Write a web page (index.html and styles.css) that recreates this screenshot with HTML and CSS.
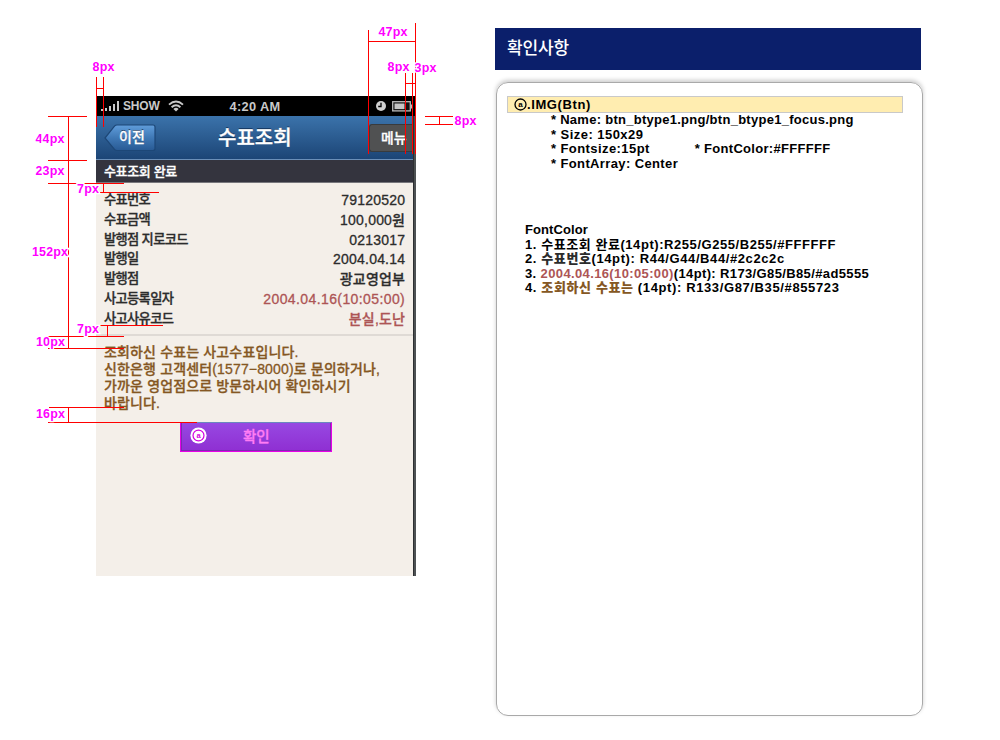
FILE: index.html
```html
<!DOCTYPE html>
<html lang="ko">
<head>
<meta charset="utf-8">
<title>수표조회</title>
<link rel="stylesheet" href="styles.css">
</head>
<body>
<main class="board">
  <section class="phone">
    <div class="screen">
      <div class="status">
        <svg class="signal" width="18" height="12" viewBox="0 0 18 12"><path d="M0 9h2v2H0zM4 8h2v3H4zM8 6h2v5H8zM12 4h2v7h-2zM16 1h2v10h-2z" fill="#c9c9c9"/></svg>
        <span class="carrier">SHOW</span>
        <svg class="wifi" width="16" height="12" viewBox="0 0 16 12" fill="none" stroke="#c9c9c9" stroke-width="1.9"><path d="M1 4.6Q8-1.6 15 4.6M3.6 7.3Q8 3.2 12.4 7.3"/><path d="M5.4 8.9Q8 6.6 10.6 8.9L8 11.5z" fill="#c9c9c9" stroke="none"/></svg>
        <span class="clock">4:20 AM</span>
        <svg class="alarm" width="10" height="10" viewBox="0 0 10 10"><circle cx="5" cy="5" r="5" fill="#d0d0d0"/><path d="M5 1.8V5.5H2.2" fill="none" stroke="#000" stroke-width="1.3"/></svg>
        <svg class="battery" width="21" height="11" viewBox="0 0 21 11"><rect x=".7" y=".7" width="17.6" height="9.2" fill="#111" stroke="#bbb" stroke-width="1.3"/><rect x="2.5" y="2.5" width="10" height="5.6" fill="#c4c4c4"/><path d="M19 3.5h2v4h-2z" fill="#bbb"/></svg>
      </div>
      <header class="nav">
        <div class="back">
          <svg class="back-shape" width="52" height="28" viewBox="0 0 52 28"><defs><linearGradient id="bk" x2="0" y2="1"><stop offset="0" stop-color="#609ddb"/><stop offset=".5" stop-color="#3f78b5"/><stop offset="1" stop-color="#285a94"/></linearGradient></defs><path d="M1 14L10.5 2.2Q11.5 1 13 1H49Q51 1 51 3V24.5Q51 26.5 49 26.5H13Q11.5 26.5 10.5 25.3Z" fill="url(#bk)" stroke="#1d4777" stroke-width="1.2"/></svg>
          <span class="back-text">이전</span>
        </div>
        <h1 class="title">수표조회</h1>
        <div class="menu">메뉴</div>
      </header>
      <div class="section">수표조회 완료</div>
      <dl class="rows">
        <div class="row"><dt>수표번호</dt><dd>79120520</dd></div>
        <div class="row"><dt>수표금액</dt><dd>100,000원</dd></div>
        <div class="row"><dt>발행점 지로코드</dt><dd>0213017</dd></div>
        <div class="row"><dt>발행일</dt><dd>2004.04.14</dd></div>
        <div class="row"><dt>발행점</dt><dd>광교영업부</dd></div>
        <div class="row"><dt>사고등록일자</dt><dd class="alert date">2004.04.16(10:05:00)</dd></div>
        <div class="row"><dt>사고사유코드</dt><dd class="alert">분실,도난</dd></div>
      </dl>
      <p class="message">조회하신 수표는 사고수표입니다.<br>신한은행 고객센터(1577−8000)로 문의하거나,<br>가까운 영업점으로 방문하시어 확인하시기<br>바랍니다.</p>
      <div class="confirm">
        <svg class="marker" width="17" height="17" viewBox="0 0 18 18"><circle cx="9" cy="9" r="8.6" fill="#fff"/><circle cx="9" cy="9" r="5.8" fill="none" stroke="#d400e0" stroke-width="1.3"/><text x="9" y="11.7" text-anchor="middle" class="marker-text">a</text></svg>
        <span class="confirm-text">확인</span>
      </div>
    </div>
  </section>
  <aside class="spec">
    <h2 class="spec-title">확인사항</h2>
    <div class="card">
      <div class="tag"><svg width="13" height="13" viewBox="0 0 13 13"><circle cx="6.5" cy="6.5" r="5.5" fill="none" stroke="#000" stroke-width="1.3"/><text x="6.5" y="9.2" text-anchor="middle" class="tag-text">a</text></svg><span class="tag-name">.IMG(Btn)</span></div>
      <ul class="props">
        <li class="prop-name">* Name: btn_btype1.png/btn_btype1_focus.png</li>
        <li class="prop-size">* Size: 150x29</li>
        <li class="prop-font"><span>* Fontsize:15pt</span><span class="color-prop">* FontColor:#FFFFFF</span></li>
        <li class="prop-array">* FontArray: Center</li>
      </ul>
      <div class="colors">
        <div class="color-head">FontColor</div>
        <div class="color-white">1. 수표조회 완료(14pt):R255/G255/B255/#FFFFFF</div>
        <div class="color-ink">2. <b class="ink">수표번호</b>(14pt): R44/G44/B44/#2c2c2c</div>
        <div class="color-red">3. <b class="red">2004.04.16(10:05:00)</b>(14pt): R173/G85/B85/#ad5555</div>
        <div class="color-brown">4. <b class="brown">조회하신 수표는</b> (14pt): R133/G87/B35/#855723</div>
      </div>
    </div>
  </aside>
  <svg class="measures" width="500" height="480" viewBox="0 0 500 480">
    <path class="guide" d="M96.5 77V127M103.5 77V127M96 88.5H104
      M48 116.5H87M48 160.5H87M48 183.5H124M68.5 116V349M103.5 183V193M100 192.5H159
      M100 325.5H163M107.5 325V336M48 336.5H124M48 348.5H124
      M49 407.5H124M48 422.5H197M68.5 407V423
      M368.5 30V154M415.5 23V154M368 41.5H416M405.5 73V154M412.5 73V154M405 83.5H416
      M425 116.5H453M425 124.5H453M439.5 116V125"/>
    <g class="measure">
      <text x="92.5" y="71" textLength="22">8px</text>
      <text x="35.5" y="143" textLength="29">44px</text>
      <text x="35.5" y="175" textLength="29">23px</text>
      <text x="77" y="193" textLength="22">7px</text>
      <text x="32" y="256" textLength="36">152px</text>
      <text x="77" y="333" textLength="22">7px</text>
      <text x="36" y="346" textLength="29">10px</text>
      <text x="36" y="418" textLength="29">16px</text>
      <text x="378.5" y="36" textLength="29">47px</text>
      <text x="387.5" y="71" textLength="22">8px</text>
      <text x="414.5" y="72" textLength="22">3px</text>
      <text x="454.5" y="125" textLength="22">8px</text>
    </g>
  </svg>
</main>
</body>
</html>
```
FILE: styles.css
```css
* { box-sizing: border-box; }
body { margin: 0; background: #fff; font-family: "Liberation Sans", "Noto Sans CJK KR", sans-serif; }
.board { position: relative; display: flex; align-items: flex-start; width: 1000px; height: 740px; padding: 28px 77px 0 96px; }
.phone { width: 320px; margin-top: 68px; height: 480px; background: linear-gradient(90deg, #2d2f31 0 1px, #4d5153 1px) right / 3px 100% no-repeat; -webkit-text-stroke: .3px; }
.screen { width: 317px; height: 480px; background: #f4efe9; }
.status { display: flex; align-items: center; width: 320px; height: 20px; background: #000; color: #c9c9c9; font: bold 12px "Liberation Sans", sans-serif; padding-left: 5px; -webkit-text-stroke: 0; }
.signal, .wifi, .alarm, .battery { flex: none; }
.carrier { margin-left: 4px; letter-spacing: -.2px; }
.wifi { margin-left: 8px; }
.clock { width: 54px; margin-left: 46px; letter-spacing: .35px; font-size: 12.8px; white-space: nowrap; }
.alarm { margin-left: 92px; }
.battery { margin-left: 6px; }
.nav { display: flex; align-items: flex-start; height: 44px; background: linear-gradient(#3b73ab, #1c4576); border-bottom: 1px solid #6b8fb8; color: #fff; text-shadow: 0 -1px #12335a; }
.back { display: flex; position: relative; flex: none; width: 52px; height: 28px; margin: 8px 0 0 8px; }
.back-shape { position: absolute; inset: 0; }
.back-text { position: relative; margin-left: 15px; font-size: 14px; line-height: 26px; font-weight: 500; }
.title { flex: none; margin: 0 0 0 62px; width: 151px; font-size: 20px; line-height: 44px; font-weight: 500; white-space: nowrap; }
.menu { flex: none; width: 44px; height: 28px; margin-top: 8px; border: 1px solid #393b3d; border-right: 0; border-radius: 3px 0 0 3px; background: #505152; padding-left: 11px; font-size: 13.8px; line-height: 27px; font-weight: 500; white-space: nowrap; text-shadow: none; }
.section { height: 23px; background: #34343e; border-bottom: 1px solid #77777c; color: #fff; padding-left: 8px; font-size: 13px; line-height: 23px; font-weight: 500; letter-spacing: -.35px; }
.rows { margin: 0; height: 153px; padding: 7px 8px 0; border-bottom: 2px solid #dfdad5; color: #2c2c2c; font-size: 13.3px; }
.row { display: flex; justify-content: space-between; height: 19.8px; line-height: 20px; white-space: nowrap; font-weight: 500; }
.row dt { letter-spacing: -.7px; }
.row dd { margin: 0 -.2px 0 0; font-size: 14px; letter-spacing: .2px; }
.row .alert { color: #ad5555; }
.row .date { letter-spacing: .4px; }
.message { margin: 8px 0 0 8px; color: #855723; font-size: 14px; line-height: 17px; font-weight: 500; letter-spacing: .15px; white-space: nowrap; }
.confirm { display: flex; align-items: center; width: 152px; height: 30px; margin: 10px 0 0 84px; padding: 0 0 3px 9px; border: 1px solid #e800e8; border-top-color: #6a86c0; background: linear-gradient(#9748e2, #8f2fd2); box-shadow: inset 1px -1px #7c2cae, inset -1px 0 #7c2cae; color: #ff7df4; font-size: 14.5px; font-weight: 500; }
.marker-text { font: bold 8px "Liberation Sans", sans-serif; fill: #d400e0; -webkit-text-stroke: 0; }
.confirm-text { margin-left: 36px; }
.spec { width: 428px; margin-left: 79px; }
.spec-title { width: 426px; height: 42px; margin: 0; padding-left: 12px; background: #0b1f6b; color: #fff; font-size: 17px; line-height: 41px; font-weight: 500; letter-spacing: -.1px; }
.card { width: 427px; height: 634px; margin: 12px 0 0 1px; padding: 13px 0 0 10px; border: 1px solid #a9a9a9; border-radius: 12px; box-shadow: 0 -2px 4px rgba(0,0,0,.2); font: bold 13px/14.6px "Liberation Sans", "Noto Sans CJK KR", sans-serif; color: #000; }
.tag { display: flex; align-items: center; width: 396px; height: 17px; border: 1px solid #c9c9c9; background: #ffedb0; padding-left: 6px; }
.tag-name { letter-spacing: .6px; padding-top: 1px; }
.tag-text { font: bold 8px "Liberation Sans", sans-serif; }
.props { list-style: none; margin: 0; padding: 0 0 0 44px; }
.props li { height: 14.6px; display: flex; white-space: pre; }
.prop-name { letter-spacing: .27px; }
.prop-size { letter-spacing: .46px; }
.prop-font { letter-spacing: .42px; }
.color-prop { margin-left: 45px; letter-spacing: .3px; }
.prop-array { letter-spacing: .38px; }
.colors { margin: 52px 0 0 18px; }
.colors div { height: 14.5px; white-space: pre; }
.color-head { letter-spacing: .1px; }
.color-white { letter-spacing: .56px; }
.color-ink { letter-spacing: .6px; }
.color-red { letter-spacing: .37px; }
.color-brown { letter-spacing: .62px; }
.ink { color: #2c2c2c; }
.red { color: #ad5555; }
.brown { color: #855723; }
.measures { position: absolute; left: 0; top: 0; }
.guide { fill: none; stroke: #f00; stroke-width: 1; shape-rendering: crispEdges; }
.measure { font: bold 12.5px "Liberation Sans", sans-serif; fill: #f0f; stroke: #fff; stroke-width: 2.5px; paint-order: stroke; }
```
